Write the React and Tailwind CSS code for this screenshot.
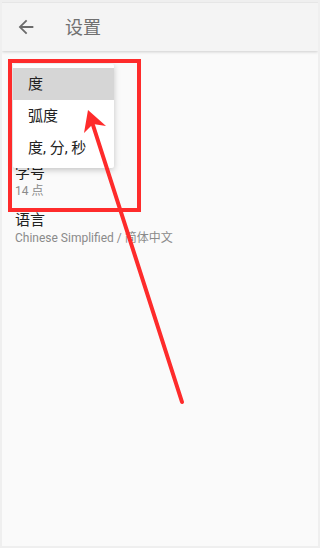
import React from 'react'

const font = { fontFamily: 'Roboto, "Noto Sans CJK SC", "Noto Sans", sans-serif' }

const SettingRow = ({ title, value }) => (
  <div className="h-[47px] px-[13px] pt-[5px]">
    <p className="text-[15px] leading-[20px] text-[#212121]">{title}</p>
    <p className="text-[12px] leading-[17px] text-[#8a8a8a]">{value}</p>
  </div>
)

const options = ['度', '弧度', '度, 分, 秒']

export default function App() {
  return (
    <div style={font} className="relative w-[320px] h-[548px] overflow-hidden bg-[#fafafa] border-2 border-[#efefef]">
      {/* toolbar */}
      <div className="h-[49px] flex items-center bg-[#f4f4f4] border-t border-[#e6e6e6] shadow-[0_1px_3px_rgba(0,0,0,0.18)]">
        <svg viewBox="0 0 24 24" className="w-[22px] h-[22px] ml-[13px] fill-[#6b6b6b]">
          <path d="M20 11H7.83l5.59-5.59L12 4l-8 8 8 8 1.41-1.41L7.83 13H20v-2z" />
        </svg>
        <span className="ml-[28px] text-[18px] text-[#707070]">设置</span>
      </div>

      {/* settings list; the first two rows sit under the open menu */}
      <div className="pt-[107px]">
        <SettingRow title="字号" value="14 点" />
        <SettingRow title="语言" value="Chinese Simplified / 简体中文" />
      </div>

      {/* dropdown menu */}
      <div className="absolute left-[11px] top-[62px] w-[101px] py-[4px] bg-white rounded-[2px] shadow-[0_2px_6px_rgba(0,0,0,0.22)]">
        {options.map((opt, i) => (
          <div
            key={opt}
            className={`h-[32px] flex items-center pl-[15px] text-[15px] text-[#222] ${i === 0 ? 'bg-[#d6d6d6]' : ''}`}
          >
            {opt}
          </div>
        ))}
      </div>

      {/* annotation box */}
      <div className="absolute left-[6px] top-[57px] w-[133px] h-[153px] border-[4px] border-[#fe2b2b]" />

      {/* annotation arrow */}
      <svg className="absolute -left-[2px] -top-[2px] w-[320px] h-[548px]" viewBox="0 0 320 548">
        <line x1="182" y1="402" x2="92" y2="122" stroke="#fe2b2b" strokeWidth="4" strokeLinecap="round" />
        <polygon points="88,110 106,126 93,124 84,133" fill="#fe2b2b" />
      </svg>
    </div>
  )
}
